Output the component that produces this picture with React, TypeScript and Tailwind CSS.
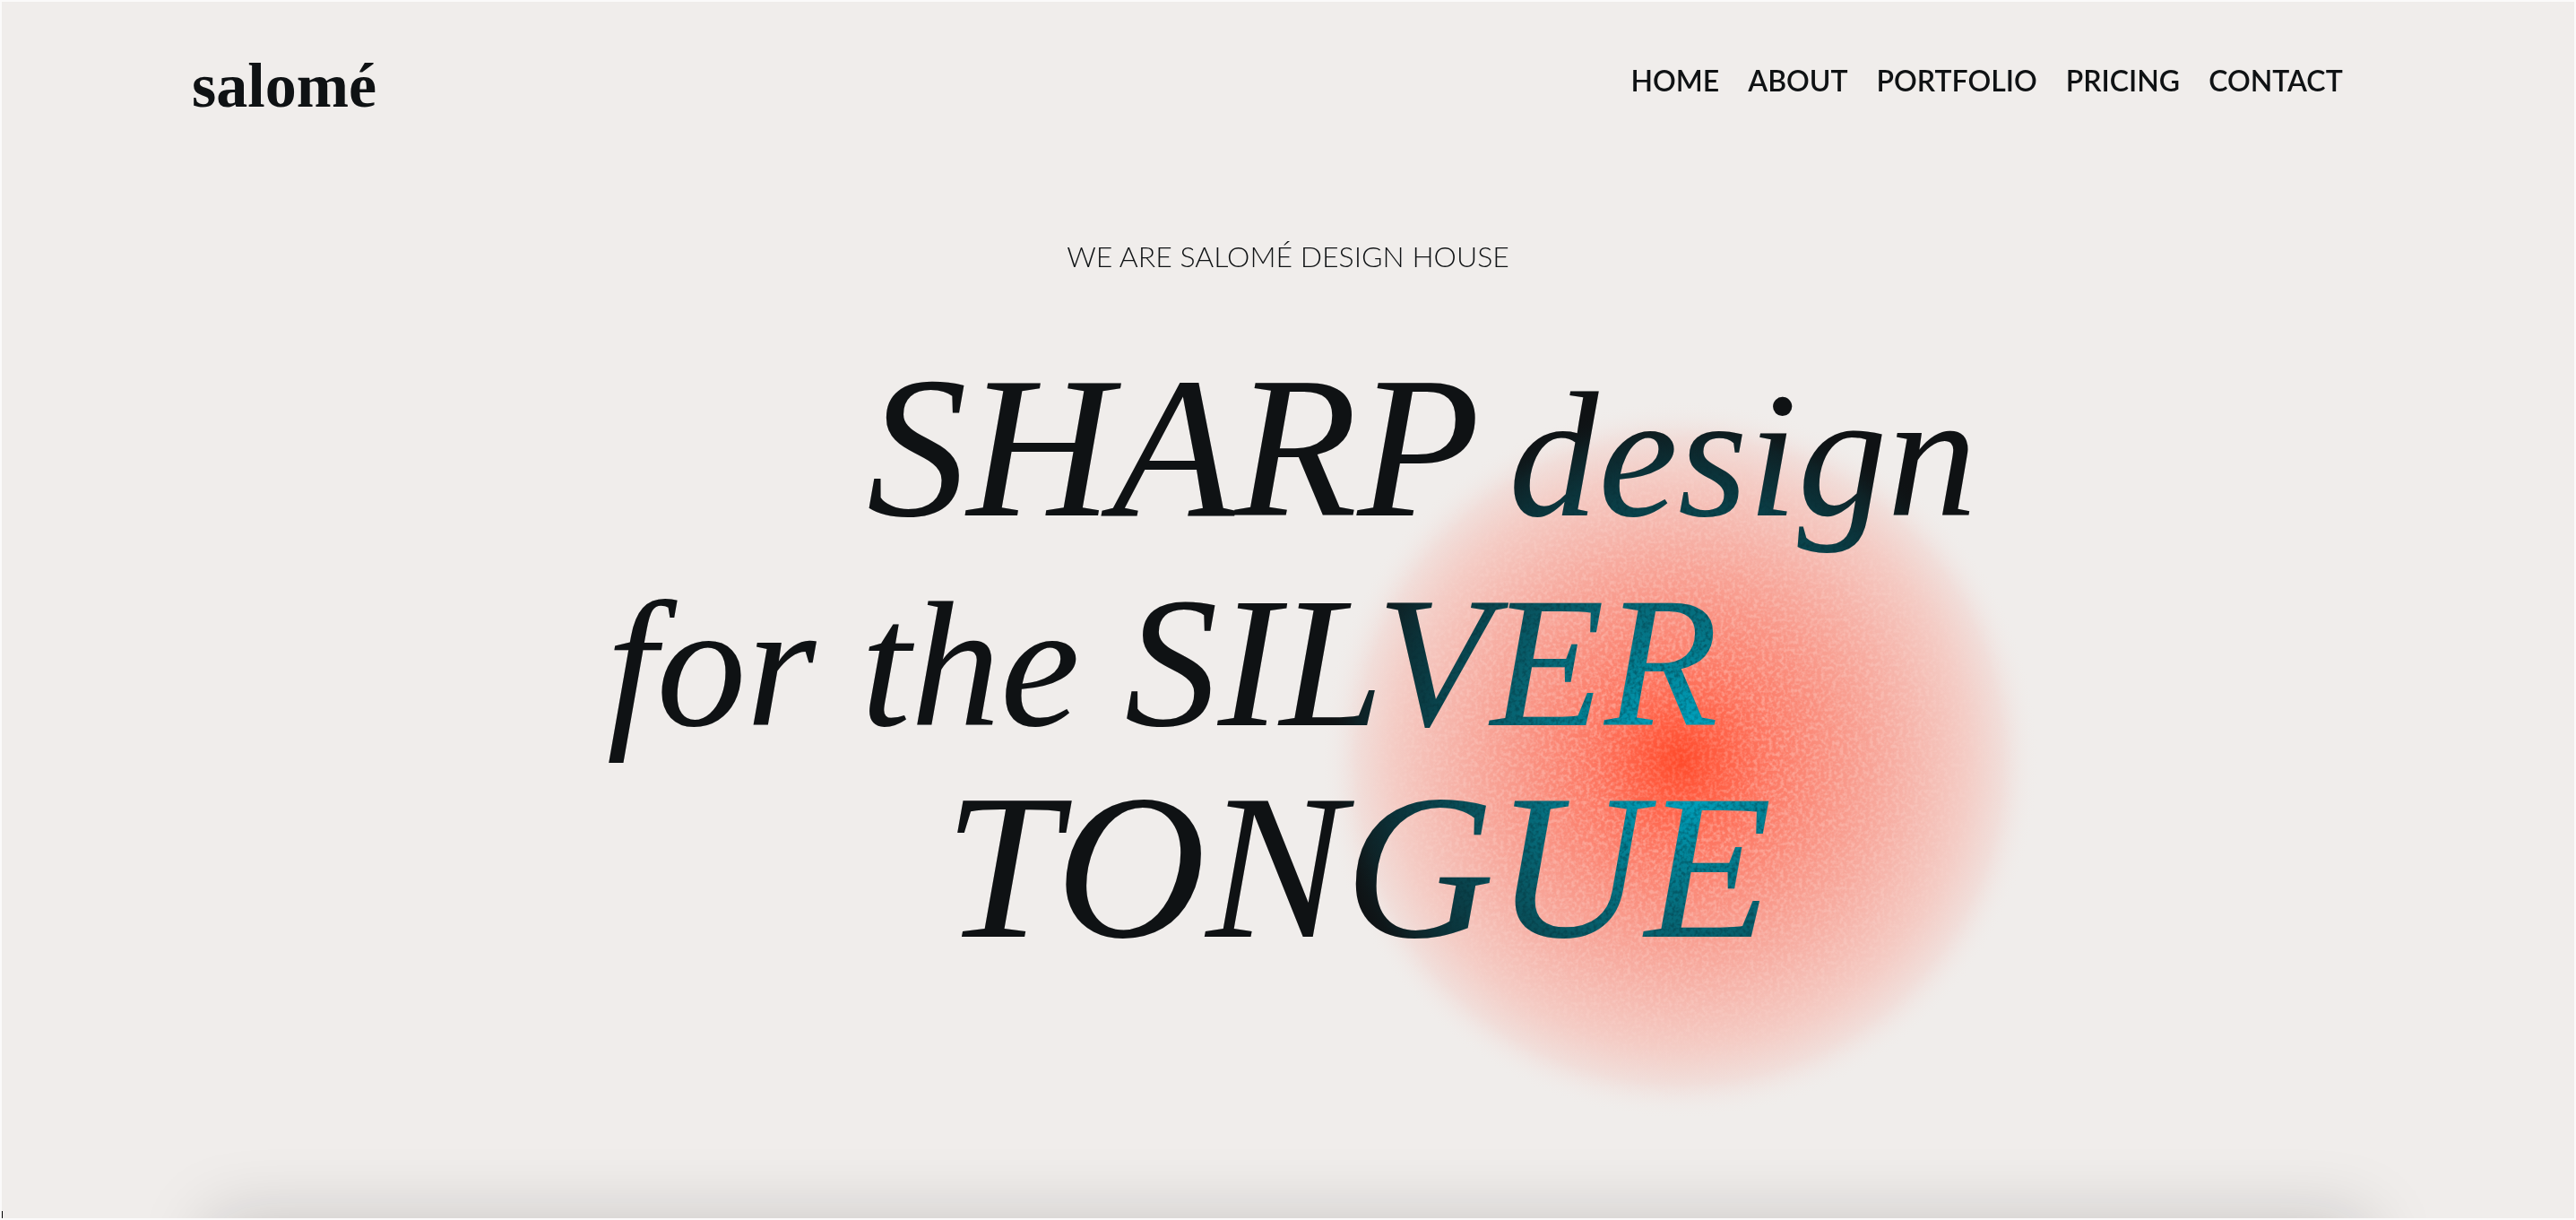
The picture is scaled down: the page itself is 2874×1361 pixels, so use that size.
const links = ["Home", "About", "Portfolio", "Pricing", "Contact"];

function Glow() {
  return (
    <svg
      aria-hidden="true"
      viewBox="0 0 800 800"
      className="pointer-events-none absolute top-[430px] left-[51%] -ml-2 size-[832px]"
    >
      <defs>
        <radialGradient id="glow">
          <stop offset="0" stopColor="#ff4a2a" />
          <stop offset="0.1" stopColor="#ff5c40" />
          <stop offset="0.25" stopColor="#fd7863" />
          <stop offset="0.45" stopColor="#f99788" />
          <stop offset="0.65" stopColor="#f6b5ab" />
          <stop offset="0.8" stopColor="#f4ccc5" />
          <stop offset="0.9" stopColor="#f1deda" />
          <stop offset="1" stopColor="#f0edeb" stopOpacity="0" />
        </radialGradient>
        <radialGradient id="grainFade">
          <stop offset="0" stopColor="#fff" stopOpacity="0.15" />
          <stop offset="0.25" stopColor="#fff" stopOpacity="0.35" />
          <stop offset="0.7" stopColor="#fff" stopOpacity="0.25" />
          <stop offset="0.95" stopColor="#fff" stopOpacity="0" />
        </radialGradient>
        <mask id="grainMask">
          <circle cx="400" cy="400" r="385" fill="url(#grainFade)" />
        </mask>
        <filter id="grain" x="0" y="0" width="100%" height="100%">
          <feTurbulence type="fractalNoise" baseFrequency="0.25" numOctaves="2" seed="4" />
          <feColorMatrix values="0 0 0 0 1  0 0 0 0 0.75  0 0 0 0 0.7  3 0 0 0 -1.2" />
        </filter>
      </defs>
      <circle cx="400" cy="400" r="385" fill="url(#glow)" />
      <g mask="url(#grainMask)">
        <rect width="800" height="800" filter="url(#grain)" />
      </g>
    </svg>
  );
}

export default function App() {
  return (
    <div className="relative isolate flex min-h-screen flex-col overflow-hidden border-2 border-[#fbfafa] bg-[#f0edeb] font-['Lato',sans-serif] text-[#0f1214]">
      <Glow />
      <header className="relative flex items-end justify-between pt-12 pr-[9%] pl-[212px]">
        <a
          href="#home"
          className="font-['Liberation_Serif',serif] text-[70px] leading-[92px] font-bold"
        >
          salomé
        </a>
        <nav className="flex gap-8 pb-8 text-[32px] leading-10 font-semibold uppercase">
          {links.map((name) => (
            <a key={name} href={`#${name.toLowerCase()}`}>
              {name}
            </a>
          ))}
        </nav>
      </header>
      <p className="relative mt-[124px] text-center text-[32px] leading-10 font-light uppercase">
        We are Salomé Design House
      </p>
      <main className="grow mix-blend-difference">
        <h1 className="mt-[76px] pl-[675px] font-['Liberation_Serif',serif] text-[224px] leading-[234px] whitespace-nowrap text-white italic">
          <span className="flex items-baseline gap-8 pl-[290px]">
            <span>SHARP</span>{" "}
            <span className="text-[200px] leading-none">design</span>
          </span>
          <span className="block">
            <span className="text-[200px] leading-none">for the </span>
            <span className="text-[208px] leading-none">SILVER</span>
          </span>
          <span className="block pl-[376px] text-[232px]">TONGUE</span>
        </h1>
      </main>
      <div className="relative mx-[232px] -mb-40 h-40 shadow-[0_0_80px_rgba(15,18,20,0.18)]" />
      <span className="absolute bottom-0 left-0 h-2 w-px bg-black" />
    </div>
  );
}
